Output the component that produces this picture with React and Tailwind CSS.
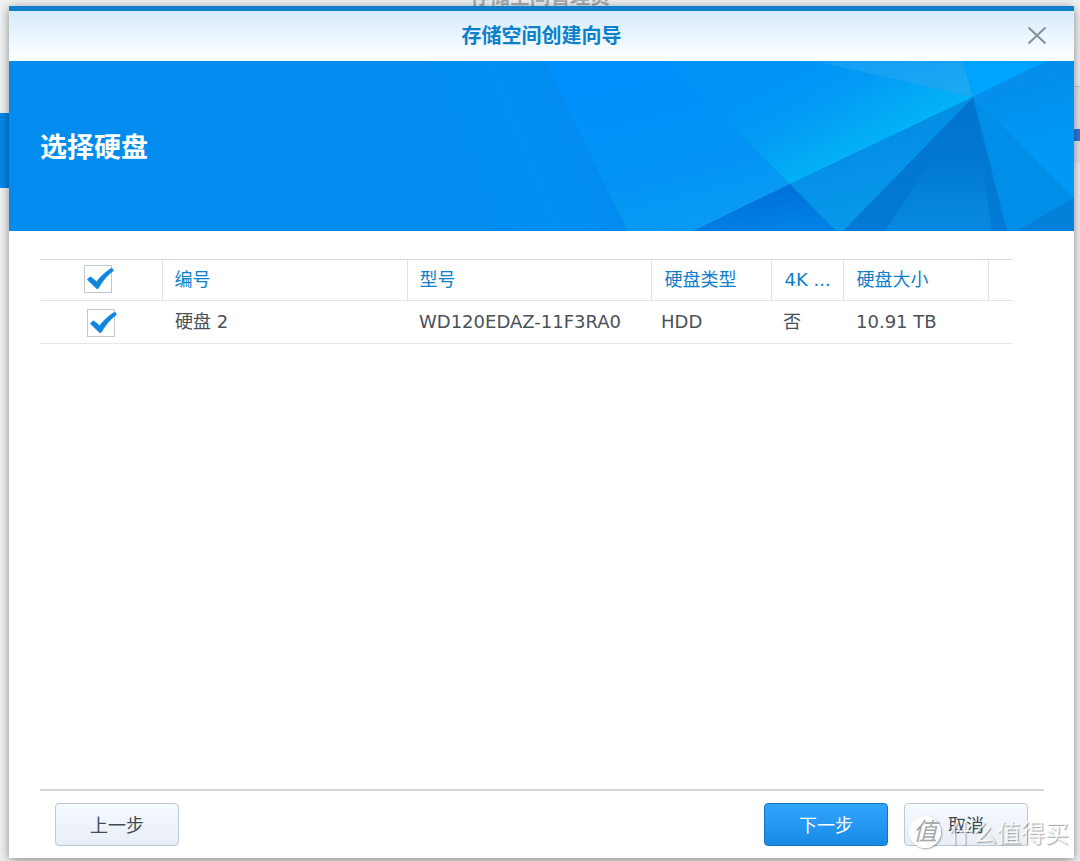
import { useState } from 'react'

const disks = [
  { id: 'disk2', name: '硬盘 2', model: 'WD120EDAZ-11F3RA0', type: 'HDD', native4k: '否', size: '10.91 TB' },
]

function CheckBox({ label, checked, onChange }) {
  return (
    <label className="relative block size-7">
      <input
        type="checkbox"
        aria-label={label}
        checked={checked}
        onChange={onChange}
        className="block size-7 appearance-none border border-[#bfc9d2] bg-white"
      />
      {checked && (
        <svg className="pointer-events-none absolute top-0 left-0 h-7 w-8" viewBox="0 0 32 28" aria-hidden="true">
          <path
            d="M3.2 14.6 6.2 11.8C8.4 13 10.4 14.6 12.6 16.8 16.6 11.4 21.6 6.6 27.8 3L29.6 5.6C24 9.6 18.6 15.8 14.2 23.6H12.4C9.4 20.6 6.8 18 3.2 14.6Z"
            fill="#0f86dc"
            stroke="#0f86dc"
            strokeWidth="0.6"
            strokeLinejoin="round"
          />
        </svg>
      )}
    </label>
  )
}

function Facets() {
  return (
    <svg
      className="absolute inset-y-0 right-0 h-full w-[654px]"
      viewBox="0 0 654 170"
      preserveAspectRatio="xMaxYMid slice"
      aria-hidden="true"
    >
      <defs>
        <linearGradient id="far" gradientUnits="userSpaceOnUse" x1="0" y1="0" x2="150" y2="-60">
          <stop offset="0" stopColor="#028cf0" />
          <stop offset="0.4" stopColor="#028ff6" />
          <stop offset="0.85" stopColor="#028bf0" />
          <stop offset="1" stopColor="#028bf0" />
        </linearGradient>
        <linearGradient id="mid" x1="0.3" y1="0" x2="0.7" y2="1">
          <stop offset="0" stopColor="#0090fd" />
          <stop offset="0.6" stopColor="#0493f5" />
          <stop offset="1" stopColor="#0a9df2" />
        </linearGradient>
        <linearGradient id="bright" gradientUnits="userSpaceOnUse" x1="360" y1="0" x2="420" y2="112">
          <stop offset="0" stopColor="#0292f8" />
          <stop offset="0.45" stopColor="#029bf4" />
          <stop offset="1" stopColor="#04b5f7" />
        </linearGradient>
        <linearGradient id="top" x1="0" y1="0" x2="1" y2="1">
          <stop offset="0" stopColor="#139df8" />
          <stop offset="1" stopColor="#1cabf0" />
        </linearGradient>
        <linearGradient id="right" x1="0.4" y1="0" x2="0.6" y2="1">
          <stop offset="0" stopColor="#058ce8" />
          <stop offset="0.7" stopColor="#0099f5" />
          <stop offset="1" stopColor="#0099f5" />
        </linearGradient>
        <linearGradient id="low" x1="0" y1="0" x2="0.4" y2="1">
          <stop offset="0" stopColor="#0087e2" />
          <stop offset="1" stopColor="#0999ec" />
        </linearGradient>
        <linearGradient id="dark" x1="0.5" y1="0" x2="0.6" y2="1">
          <stop offset="0" stopColor="#0074ce" />
          <stop offset="1" stopColor="#027bd6" />
        </linearGradient>
        <linearGradient id="glow" x1="0.5" y1="0" x2="0.5" y2="1">
          <stop offset="0.4" stopColor="#0a90e6" stopOpacity="0" />
          <stop offset="1" stopColor="#0a90e6" stopOpacity="0.65" />
        </linearGradient>
        <linearGradient id="corner" x1="0" y1="0" x2="0.4" y2="1">
          <stop offset="0" stopColor="#006bd3" />
          <stop offset="1" stopColor="#0080e6" />
        </linearGradient>
      </defs>
      <rect width="654" height="170" fill="url(#far)" />
      <path d="M125 0H400V170H208Z" fill="url(#mid)" />
      <path d="M247 0H396L553 36 370 123Z" fill="url(#bright)" />
      <path d="M395 0H543L553 36Z" fill="url(#top)" />
      <path d="M543 0H627L553 36Z" fill="#00a3fd" />
      <path d="M627 0H654V137L553 36Z" fill="url(#right)" />
      <path d="M553 36 654 137V170H587Z" fill="#018ee9" />
      <path d="M654 137V170H597Z" fill="#0380d9" />
      <path d="M553 36 587 170H423Z" fill="url(#dark)" />
      <path d="M553 36 572 170H465Z" fill="url(#glow)" />
      <path d="M553 36 423 170H416L370 123Z" fill="url(#low)" />
      <path d="M370 123 416 170H273Z" fill="url(#corner)" />
    </svg>
  )
}

// Window of the storage manager, of which only the edges show round the wizard
function Backdrop() {
  return (
    <div className="absolute inset-0 overflow-hidden bg-[#f1f2f3]" aria-hidden="true">
      <div className="absolute inset-x-0 top-[-13px] text-center text-xl leading-5 font-bold text-[#a8adb2]">
        存储空间管理员
      </div>
      <div className="absolute top-[113px] left-0 h-[75px] w-4 bg-[#0088ea]" />
      <div className="absolute top-[86px] right-0 h-[77px] w-4 border-t border-[#c5ccd5] bg-[#e4e8f5]" />
      <div className="absolute top-[129px] right-0 h-3 w-4 bg-[#2f7ad8]" />
    </div>
  )
}

function Watermark() {
  return (
    <div className="pointer-events-none absolute right-[11px] bottom-[11px] flex items-center gap-2 text-white">
      <span className="flex size-8 items-center justify-center rounded-full bg-white/90 text-2xl leading-8 text-[#a5a8ab] italic shadow-[1px_1px_2px_rgba(0,0,0,0.35)]">
        值
      </span>
      <span className="pt-1 text-2xl leading-8 text-white/80 [text-shadow:1px_1px_1px_rgba(0,0,0,0.35)]">
        什么值得买
      </span>
    </div>
  )
}

const plainButton =
  'h-[43px] w-[124px] rounded border border-[#bcc8d3] bg-linear-to-b from-[#f5faff] to-[#e8eef5] pt-0.5 text-lg text-[#414b55]'

export default function App() {
  const [selected, setSelected] = useState(['disk2'])
  const allSelected = selected.length === disks.length

  function toggle(id) {
    setSelected((cur) => (cur.includes(id) ? cur.filter((d) => d !== id) : [...cur, id]))
  }

  function toggleAll() {
    setSelected(allSelected ? [] : disks.map((d) => d.id))
  }

  return (
    <div className="relative flex min-h-screen flex-col overflow-hidden pt-[6px] pr-[6px] pb-[3px] pl-[9px] font-['DejaVu_Sans','Noto_Sans_CJK_SC',sans-serif]">
      <Backdrop />

      <section
        role="dialog"
        aria-labelledby="wizard-title"
        className="relative flex flex-1 flex-col bg-white shadow-[0_2px_10px_rgba(0,0,0,0.45)]"
      >
        <header className="flex h-[55px] items-center border-t-5 border-[#0f80cb] bg-linear-to-b from-[#d6ebfc] to-white pr-[23px] pl-[51px]">
          <h1 id="wizard-title" className="flex-1 text-center text-xl font-bold text-[#0c80ca]">
            存储空间创建向导
          </h1>
          <button type="button" aria-label="关闭" className="flex size-7 items-center justify-center text-[#868e96]">
            <svg className="size-5" viewBox="0 0 20 20" fill="none" stroke="currentColor" strokeWidth="2" aria-hidden="true">
              <path d="M1.5 1.5 18.5 17.5M18.5 1.5 1.5 17.5" />
            </svg>
          </button>
        </header>

        <div className="relative flex h-[170px] items-center overflow-hidden bg-[#028cf0] px-[31px] pt-1">
          <Facets />
          <h2 className="relative text-[27px] font-bold text-white">选择硬盘</h2>
        </div>

        <div className="flex-1 pt-7 pr-[61px] pl-[31px]">
          <table className="w-full table-fixed border-collapse text-left text-lg text-[#4a5159]">
            <colgroup>
              <col className="w-[122px]" />
              <col className="w-[245px]" />
              <col />
              <col className="w-[120px]" />
              <col className="w-[72px]" />
              <col className="w-[145px]" />
              <col className="w-[25px]" />
            </colgroup>
            <thead>
              <tr className="h-[41px] border-t border-b border-t-[#d3dce4] border-b-[#e0e7ec] whitespace-nowrap text-[#0c80ca] *:border-r *:border-[#dbe5ec] *:p-0 *:pl-[13px] *:font-normal *:last:border-r-0">
                <th>
                  <div className="pb-0.5 pl-[31px]">
                    <CheckBox label="全选" checked={allSelected} onChange={toggleAll} />
                  </div>
                </th>
                <th className="pl-3!">编号</th>
                <th className="pl-3!">型号</th>
                <th>硬盘类型</th>
                <th>4K ...</th>
                <th>硬盘大小</th>
                <th></th>
              </tr>
            </thead>
            <tbody>
              {disks.map((d) => (
                <tr key={d.id} className="h-[43px] border-b border-[#e4e8ea] whitespace-nowrap *:p-0 *:pl-[13px]">
                  <td>
                    <div className="pt-0.5 pl-[34px]">
                      <CheckBox label={d.name} checked={selected.includes(d.id)} onChange={() => toggle(d.id)} />
                    </div>
                  </td>
                  <td>{d.name}</td>
                  <td className="pl-3!">{d.model}</td>
                  <td className="pl-2.5!">{d.type}</td>
                  <td className="pl-3!">{d.native4k}</td>
                  <td>{d.size}</td>
                  <td></td>
                </tr>
              ))}
            </tbody>
          </table>
        </div>

        <footer className="mr-[30px] ml-[31px] flex gap-4 border-t-2 border-[#d4d6d8] pt-3 pr-4 pb-3 pl-[15px]">
          <button type="button" className={plainButton}>
            上一步
          </button>
          <button
            type="button"
            className="ml-auto h-[43px] w-[124px] rounded border border-[#1474c0] bg-linear-to-b from-[#31a4fd] to-[#178be4] pt-0.5 text-lg text-white"
          >
            下一步
          </button>
          <button type="button" className={plainButton}>
            取消
          </button>
        </footer>
      </section>

      <Watermark />
    </div>
  )
}
